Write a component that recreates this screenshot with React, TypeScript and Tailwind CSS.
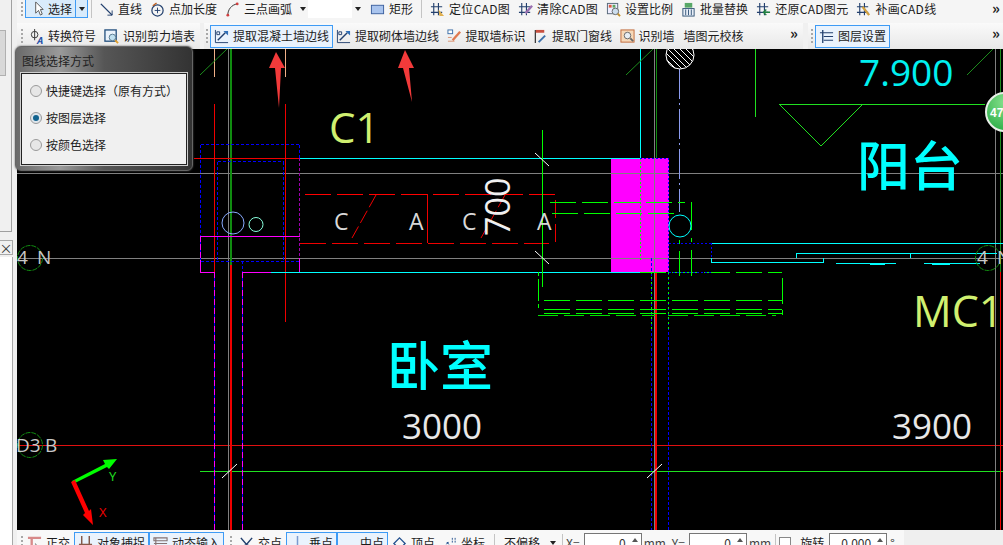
import type { ReactNode } from 'react';

type Seg = [number, number, number, number, string, number?, string?];

const RED = '#f00000';
const CYAN = '#00ffff';
const GREEN = '#00ff00';
const GRAY = '#808080';
const BLUE = '#0000ff';
const PINK = '#ff00ff';
const DGREEN = '#1c8c1c';

const LINES: Seg[] = [
  // long grid lines
  [17, 173.5, 1003, 173.5, GRAY],
  [17, 258.5, 1003, 258.5, GRAY],
  [17, 445.5, 1003, 445.5, '#e01010'],
  [200, 471.5, 1003, 471.5, '#20e020'],
  [228.5, 49, 228.5, 530, GRAY],
  [230.5, 49, 230.5, 265, '#108c10', 2],
  [230.5, 265, 230.5, 530, RED, 2],
  [654.5, 49, 654.5, 530, GRAY],
  [656.5, 49, 656.5, 158, '#108c10'],
  [656, 272, 656, 530, RED, 2],
  [995.5, 49, 995.5, 530, GRAY],
  [1000.5, 49, 1000.5, 445, DGREEN],
  [1000.5, 272, 1000.5, 530, RED],
  // column at the left
  [214.5, 49, 214.5, 77, '#f0b088'],
  [285.5, 49, 285.5, 77, '#f0b088'],
  [214.5, 104, 214.5, 272, RED],
  [285.5, 104, 285.5, 322, RED],
  [194, 158.5, 300, 158.5, RED],
  [200.5, 144.5, 299.5, 144.5, BLUE, 1, '3 2'],
  [200.5, 144.5, 200.5, 236, BLUE, 1, '3 2'],
  [299.5, 144.5, 299.5, 158, BLUE, 1, '3 2'],
  [200.5, 261.5, 299.5, 261.5, BLUE, 1, '3 2'],
  [217.5, 161.5, 283.5, 161.5, BLUE, 1, '3 2'],
  [217.5, 161.5, 217.5, 261, BLUE, 1, '3 2'],
  [283.5, 161.5, 283.5, 261, BLUE, 1, '3 2'],
  [200, 236.5, 300, 236.5, PINK],
  [200.5, 236, 200.5, 261, BLUE],
  [200.5, 236, 200.5, 261, PINK, 1, '6 2'],
  [200.5, 261, 200.5, 273, PINK],
  [200, 272.5, 214, 272.5, PINK],
  [242, 272.5, 271, 272.5, PINK],
  [299.5, 258, 299.5, 272, PINK],
  [299.5, 158, 299.5, 258, '#a000b0', 1, '3 2'],
  [214.5, 272, 214.5, 530, BLUE],
  [214.5, 272, 214.5, 530, PINK, 1, '6 3'],
  [242.5, 261, 242.5, 272, BLUE, 1, '3 2'],
  [242.5, 272, 242.5, 530, BLUE],
  [242.5, 272, 242.5, 530, PINK, 1, '6 3'],
  // wall
  [300, 158.5, 640, 158.5, CYAN],
  [271, 272.5, 640, 272.5, CYAN],
  [640.5, 49, 640.5, 158, CYAN],
  // dashed red opening
  [305, 194.5, 427, 194.5, '#ff0000', 1, '26 6'],
  [433, 194.5, 555, 194.5, '#ff0000', 1, '26 6'],
  [300, 243.5, 427, 243.5, '#f00000', 1, '26 6'],
  [428, 243.5, 549, 243.5, '#f00000', 1, '26 6'],
  [427.5, 194, 427.5, 243, RED],
  [555.5, 200, 555.5, 243, RED, 1, '18 6'],
  [376, 195, 352, 238, RED, 1, '14 4'],
  [505, 195, 481, 238, RED, 1, '14 4'],
  // green cross at the opening
  [542.5, 130, 542.5, 287, GREEN],
  [535, 153, 549, 166, '#ffffff'],
  [535, 251, 549, 264, '#ffffff'],
  [222, 478, 237, 464, '#ffffff'],
  [647, 478, 662, 464, '#ffffff'],
  // right side of wall
  [640.5, 158, 640.5, 260, GREEN, 1, '2 2'],
  [640, 158.5, 669, 158.5, BLUE, 1, '2 2'],
  [668.5, 158, 668.5, 272, BLUE, 1, '2 2'],
  [651.5, 258, 651.5, 530, BLUE, 1, '3 2'],
  [651.5, 272, 651.5, 330, GREEN, 1, '2 3'],
  [668.5, 272, 668.5, 530, BLUE, 1, '3 2'],
  [668.5, 272, 668.5, 330, GREEN, 1, '2 3'],
  [679.5, 69, 679.5, 212, '#8c9cf0', 1, '30 4 2 4'],
  [679.5, 240, 679.5, 244, GREEN],
  [679.5, 251, 679.5, 276, GREEN],
  [691.5, 202, 691.5, 276, GREEN, 1, '28 8 4 8'],
  // green dashes, upper
  [550, 202.5, 685, 202.5, GREEN, 1, '26 6'],
  [552, 213.5, 675, 213.5, GREEN, 1, '26 6'],
  // green dashes, lower
  [640, 272.5, 782, 272.5, GREEN, 1, '26 6'],
  [782.5, 278, 782.5, 304, GREEN],
  [538.5, 272, 538.5, 310, GREEN, 1, '4 3 22 3'],
  [544, 300.5, 782, 300.5, GREEN, 1, '26 6'],
  [544, 309.5, 782, 309.5, GREEN, 1, '26 6'],
  [544, 313.5, 782, 313.5, GREEN, 1, '26 6'],
  [538, 315.5, 655, 315.5, '#00e000', 1, '20 6'],
  [668, 315.5, 776, 315.5, '#00e000', 1, '20 6'],
  [782.5, 310, 782.5, 315, GREEN],
  // balcony line work
  [711, 243.5, 1003, 243.5, CYAN],
  [711, 262.5, 823, 262.5, CYAN],
  [711.5, 258, 711.5, 262, CYAN],
  [823.5, 258, 823.5, 263, CYAN],
  [796, 253.5, 997, 253.5, CYAN],
  [796.5, 253, 796.5, 258, CYAN],
  [910.5, 253, 910.5, 258, CYAN],
  [836, 263.5, 896, 263.5, CYAN],
  [924, 263.5, 980, 263.5, CYAN],
  [870, 264.5, 885, 264.5, CYAN],
  [932, 264.5, 950, 264.5, CYAN],
  [669, 243.5, 711, 243.5, BLUE, 1, '2 2'],
  [669, 272.5, 711, 272.5, BLUE, 1, '2 2'],
  [711.5, 243, 711.5, 258, BLUE, 1, '2 2'],
  [755.5, 49, 755.5, 117, '#20e020'],
  [779, 104.5, 985, 104.5, '#20e020'],
  [779, 104, 821, 146, '#20e020'],
  [821, 146, 863, 104, '#20e020'],
  // thin diagonals
  [200, 75, 227, 49, DGREEN],
  [626, 75, 653, 49, DGREEN],
  [967, 75, 993, 49, DGREEN],
];

function Cad() {
  const sans = "font-['Open_Sans',sans-serif]";
  const cjk = "font-['Noto_Sans_CJK_SC',sans-serif]";
  return (
    <svg className="block h-full w-full" viewBox="17 49 986 481" fill="none">
      <defs>
        <radialGradient id="ball" cx="50%" cy="25%" r="75%">
          <stop offset="0%" stopColor="#86e08c" />
          <stop offset="100%" stopColor="#2fb04a" />
        </radialGradient>
        <clipPath id="hatch">
          <circle cx="680" cy="55" r="14" />
        </clipPath>
      </defs>

      <rect x="611" y="158" width="58" height="114" fill="#ff00ff" />

      <g shapeRendering="crispEdges">
        {LINES.filter((l) => l[0] === l[2] || l[1] === l[3]).map((l, i) => (
          <line
            key={i}
            x1={l[0]}
            y1={l[1]}
            x2={l[2]}
            y2={l[3]}
            stroke={l[4]}
            strokeWidth={l[5] ?? 1}
            strokeDasharray={l[6]}
          />
        ))}
      </g>
      {LINES.filter((l) => l[0] !== l[2] && l[1] !== l[3]).map((l, i) => (
        <line key={i} x1={l[0]} y1={l[1]} x2={l[2]} y2={l[3]} stroke={l[4]} strokeDasharray={l[6]} />
      ))}

      <circle cx="233" cy="223" r="11" stroke="#88aaff" />
      <circle cx="256" cy="224.5" r="7" stroke="#88ffdd" />
      <circle cx="680" cy="226" r="11" stroke="#00ffff" />

      <g clipPath="url(#hatch)" stroke="#fff">
        {[-18, -12, -6, 0, 6, 12, 18].map((o) => (
          <line key={o} x1={665 + o} y1={40} x2={695 + o} y2={70} />
        ))}
      </g>
      <circle cx="680" cy="55" r="14" stroke="#fff" />

      {/* grid bubbles */}
      <circle cx="30" cy="258" r="12.5" stroke="#118c11" strokeDasharray="5 1" />
      <circle cx="30" cy="445" r="12.5" stroke="#118c11" strokeDasharray="5 1" />
      <circle cx="988" cy="258" r="12.5" stroke="#118c11" strokeDasharray="5 1" />

      <g className={sans} fill="#c8c8c8" fontSize="19">
        <text x="17" y="264">4</text>
        <text x="37" y="264">N</text>
        <text x="16" y="452">D3</text>
        <text x="45" y="452">B</text>
        <text x="977" y="264">4</text>
        <text x="997" y="264">N</text>
      </g>
      <g className={sans} fill="#d8d8d8" fontSize="23">
        <text x="334" y="230">C</text>
        <text x="409" y="230">A</text>
        <text x="462" y="230">C</text>
        <text x="537" y="230">A</text>
      </g>
      <text className={sans} fill="#f0f0f0" fontSize="34" transform="translate(510 236) rotate(-90)">700</text>
      <text className={sans} fill="#d0f070" fontSize="42" x="329" y="143">C1</text>
      <text className={sans} fill="#d0f070" fontSize="43" x="913" y="327">MC1</text>
      <text className={sans} fill="#00f0f0" fontSize="37" x="859" y="86">7.900</text>
      <text className={sans} fill="#e8e8e8" fontSize="35" x="402" y="439">3000</text>
      <text className={sans} fill="#e8e8e8" fontSize="35" x="892" y="439">3900</text>
      <text className={cjk} fill="#00ffff" fontSize="53" fontWeight="500" x="857" y="186">阳台</text>
      <text className={cjk} fill="#00ffff" fontSize="53" fontWeight="500" x="387" y="386">卧室</text>

      {/* red callout arrows */}
      <path d="M276 52 L285 68 L281 68 L279 108 L275 68 L269 68 Z" fill="#f23a3a" />
      <path d="M405 50 L414 68 L409 68 L412 102 L403 68 L398 68 Z" fill="#f23a3a" />

      {/* UCS icon */}
      <path d="M72 481 L105 464 L103 460 L117 459 L109 469 L107 467 L73 484 Z" fill="#00ff00" />
      <path d="M71 482 L75 480 L89 511 L91 509 L93 525 L83 515 L85 513 Z" fill="#ff0000" />
      <text className={sans} fill="#20e020" fontSize="13" x="109" y="481">Y</text>
      <text className={sans} fill="#f00000" fontSize="13" x="99" y="517">X</text>

      {/* status ball */}
      <circle cx="1005" cy="112" r="19" fill="url(#ball)" stroke="#e8efe8" strokeWidth="2" />
      <text className="font-['Liberation_Sans',sans-serif]" fill="#fff" fontSize="12" fontWeight="700" x="990" y="117">47</text>
    </svg>
  );
}

function Ico({ children }: { children: ReactNode }) {
  return (
    <svg className="size-[15px] shrink-0" viewBox="0 0 16 16" fill="none">
      {children}
    </svg>
  );
}

const ICONS: Record<string, ReactNode> = {
  cursor: <path d="M5 1 L5 13 L8 10 L10 15 L12 14 L10 9 L13 9 Z" fill="#fff" stroke="#555" />,
  line: (
    <>
      <path d="M2 2 L14 14" stroke="#23406e" strokeWidth="1.5" />
      <path d="M14 9 V14 H9" stroke="#23406e" />
    </>
  ),
  lengthen: (
    <>
      <circle cx="8" cy="9" r="6" stroke="#23406e" strokeWidth="1.3" />
      <path d="M8 6 V12 M5 9 H11" stroke="#23406e" />
      <path d="M3 4 L7 1" stroke="#c06020" strokeWidth="1.5" />
    </>
  ),
  arc: (
    <>
      <path d="M3 14 C3 8 7 3 13 2" stroke="#333" />
      <circle cx="3" cy="14" r="1.5" fill="#d04040" />
      <circle cx="13" cy="2" r="1.5" fill="#d04040" />
    </>
  ),
  rect: <rect x="1.5" y="3.5" width="13" height="9" fill="#a9c4ee" stroke="#3b5f9e" />,
  grid: (
    <>
      <path d="M4 1 V14 M9 1 V14 M1 5 H13 M1 11 H13" stroke="#23406e" strokeWidth="1.2" />
      <path d="M9 8 L15 15 H10 Z" fill="#e0b050" />
    </>
  ),
  clear: (
    <>
      <path d="M4 1 V14 M9 1 V14 M1 5 H13 M1 11 H13" stroke="#23406e" strokeWidth="1.2" />
      <path d="M15 4 L8 12" stroke="#9a70b0" strokeWidth="2.5" />
    </>
  ),
  mag: (
    <>
      <rect x="1.5" y="1.5" width="11" height="11" fill="#eef" stroke="#567" />
      <rect x="3" y="3" width="3" height="3" fill="#e05a40" />
      <rect x="7" y="3" width="3" height="3" fill="#60a860" />
      <circle cx="10" cy="10" r="3.5" fill="#cde" stroke="#666" />
      <path d="M12.5 12.5 L15 15" stroke="#c09030" strokeWidth="2" />
    </>
  ),
  batch: (
    <>
      <rect x="2" y="7" width="12" height="8" fill="#e8eef8" stroke="#357" />
      <path d="M5 8 V14 M8 8 V14 M11 8 V14" stroke="#357" />
      <rect x="4" y="1" width="8" height="5" fill="#58a868" />
    </>
  ),
  restore: (
    <>
      <path d="M4 1 V14 M9 1 V14 M1 5 H13 M1 11 H13" stroke="#23406e" strokeWidth="1.2" />
      <path d="M15 11 H9 M11 8 L8 11 L11 14" stroke="#208040" strokeWidth="1.5" />
    </>
  ),
  draw: (
    <>
      <path d="M4 1 V14 M9 1 V14 M1 5 H13 M1 11 H13" stroke="#23406e" strokeWidth="1.2" />
      <path d="M7 5 L14 14" stroke="#d0a040" strokeWidth="2.5" />
    </>
  ),
  symbol: (
    <>
      <circle cx="6" cy="6" r="3.5" stroke="#333" />
      <path d="M6 0 V12" stroke="#333" />
      <text x="8" y="16" fontSize="10" fontWeight="700" fontStyle="italic" fill="#1f4fa8">A</text>
    </>
  ),
  table: (
    <>
      <rect x="1" y="1" width="12" height="12" fill="#eaf2fb" stroke="#23507e" strokeWidth="1.4" />
      <circle cx="9" cy="9" r="3.5" fill="#bfe0f0" stroke="#56788e" />
      <path d="M12 12 L15 15" stroke="#e0a030" strokeWidth="2" />
    </>
  ),
  extract: (
    <>
      <path d="M1.5 1 V14.5 H15" stroke="#23406e" />
      <path d="M3 3 H6 V6 H3 Z" stroke="#23406e" />
      <path d="M4 12 L12 4" stroke="#23406e" strokeWidth="1.5" />
      <path d="M10 2 L15 2 L15 7 Z" fill="#2f6fb8" />
    </>
  ),
  mark: (
    <>
      <rect x="1" y="1" width="5" height="4" fill="#fff" stroke="#3a6ea8" />
      <path d="M1 13 H8 M1 9 H5" stroke="#d89070" />
      <path d="M6 12 L14 3" stroke="#e07a50" strokeWidth="2.5" />
    </>
  ),
  door: (
    <>
      <path d="M2.5 1 V15" stroke="#333" strokeWidth="1.3" />
      <rect x="3" y="1" width="9" height="3" fill="#c85040" />
      <path d="M6 14 L13 7" stroke="#3a6ea8" strokeWidth="2" />
    </>
  ),
  wall: (
    <>
      <rect x="1" y="1" width="14" height="13" fill="#f6d8b8" stroke="#c06838" />
      <circle cx="8" cy="7" r="3.5" fill="#e8eef4" stroke="#666" />
      <path d="M11 10 L14 13" stroke="#666" strokeWidth="2" />
    </>
  ),
  layer: (
    <>
      <path d="M4 1 V15" stroke="#23406e" strokeWidth="1.4" />
      <path d="M1 4 H15 M5 8 H15 M5 12 H15" stroke="#23406e" strokeWidth="1.3" />
    </>
  ),
  ortho: (
    <>
      <path d="M1 2 H15 M5 2 V15" stroke="#d88a8a" strokeWidth="2.5" />
      <path d="M9 8 V14 L12 12 Z" fill="#fff" stroke="#999" />
    </>
  ),
  snap: (
    <>
      <path d="M4 0 V15 M12 0 V15" stroke="#7a4a3a" strokeWidth="1.4" />
      <path d="M1 9 H15" stroke="#8a5a4a" strokeWidth="1.5" />
      <rect x="5" y="10" width="6" height="5" fill="#c8ae78" />
    </>
  ),
  dyn: <path d="M1 2 H15 V5 H1 Z M1 8 H15 M1 12 H15 M3 2 V14" stroke="#857272" strokeWidth="1.2" />,
  cross: (
    <>
      <path d="M2 2 L8 9 L14 2 M8 9 V15" stroke="#23406e" strokeWidth="1.6" />
      <rect x="6" y="9" width="4" height="4" fill="#23406e" />
    </>
  ),
  perp: <path d="M8 0 V10 M2 11 H14" stroke="#7a9ad0" strokeWidth="1.6" />,
  mid: <path d="M0 11 H5 M11 11 H16 M5 11 H11" stroke="#23508e" strokeWidth="3" />,
  vertex: <path d="M8 2 L14 8 L8 14 L2 8 Z" stroke="#23508e" strokeWidth="1.4" />,
  coord: (
    <>
      <path d="M3 14 L6 6 L9 14" stroke="#23508e" strokeWidth="1.2" strokeDasharray="2 1" />
      <path d="M11 2 V8 M14 2 V8" stroke="#23508e" strokeDasharray="2 1" />
    </>
  ),
};

function Tool({ icon, label, on }: { icon?: string; label: string; on?: boolean }) {
  return (
    <div
      className={`flex h-[23px] shrink-0 items-center gap-[4px] ${
        on ? 'border border-[#3e9bf5] bg-[#eaf3fd] px-[3px]' : ''
      }`}
    >
      {icon && <Ico>{ICONS[icon]}</Ico>}
      <span className={`whitespace-nowrap ${label.includes('CAD') ? 'tracking-[0.3px]' : ''}`}>{label}</span>
    </div>
  );
}

function Grip() {
  return (
    <span className="flex h-[14px] w-[2px] shrink-0 flex-col justify-between">
      <i className="h-[2px] bg-[#a8a8a8]" />
      <i className="h-[2px] bg-[#a8a8a8]" />
      <i className="h-[2px] bg-[#a8a8a8]" />
      <i className="h-[2px] bg-[#a8a8a8]" />
    </span>
  );
}

const Caret = () => <span className="size-0 shrink-0 border-x-[3px] border-t-[4px] border-x-transparent border-t-[#222]" />;
const More = () => <span className="block text-[15px] font-bold leading-none text-[#222]">»</span>;
const Sep = () => <span className="block h-[18px] w-px shrink-0 bg-[#c4c4c4]" />;

function Spin({ value }: { value: string }) {
  return (
    <div className="relative h-[20px] w-[58px] shrink-0 border border-[#777] bg-white pr-[15px] text-right leading-[18px] text-[#333]">
      {value}
      <span className="absolute right-[3px] top-[4px] size-0 border-x-[3px] border-b-[4px] border-x-transparent border-b-[#555]" />
    </div>
  );
}

function Radio({ label, on }: { label: string; on?: boolean }) {
  return (
    <div className="flex h-[27px] items-center gap-[4px]">
      <span
        className={`flex size-[12px] items-center justify-center rounded-full border border-[#9a9a9a] ${
          on ? 'bg-[#dfe6ec]' : 'bg-[#e6e6e6]'
        }`}
      >
        {on && <span className="size-[6px] rounded-full bg-[#12638f]" />}
      </span>
      <span>{label}</span>
    </div>
  );
}

export default function App() {
  return (
    <div className="flex h-[545px] w-[1003px] overflow-hidden bg-[#f0f0f0] font-['Noto_Sans_CJK_SC',sans-serif] text-[12px] leading-none text-[#1c1c1c]">
      {/* docked panel stub */}
      <aside className="flex w-[17px] shrink-0 flex-col">
        <div className="h-[232px] w-[12px] border-r border-b border-[#a0a0a0] pt-[30px]">
          <div className="h-[46px] w-[6px] border border-l-0 border-[#b0b0b0] bg-[#d8d8d8]" />
        </div>
        <div className="mt-[8px] flex h-[15px] w-[13px] items-center justify-center border border-l-0 border-[#a8a8a8] text-[13px] text-[#333]">
          ×
        </div>
        <div className="mt-[2px] w-[13px] flex-1 border-r border-[#a8a8a8] bg-white" />
      </aside>

      <div className="relative flex min-w-0 flex-1 flex-col">
        <header className="flex h-[23px] shrink-0 items-start bg-[#f5f5f5]">
          <div className="flex h-[22px] flex-1 items-start pl-[4px]">
            <span className="mt-[2px]"><Grip /></span>
            <div className="ml-[2px] flex h-[18px] w-[63px] shrink-0 items-center border border-t-0 border-[#3e9bf5] bg-[#d9ebfb] pl-[5px]">
              <Ico>{ICONS.cursor}</Ico>
              <span className="ml-[2px] whitespace-nowrap">选择</span>
              <span className="ml-[3px] flex h-full w-[13px] items-center justify-center border-l border-[#3e9bf5]"><Caret /></span>
            </div>
            <span className="ml-[3px]"><Sep /></span>
            <div className="ml-[7px] flex h-[18px] items-center gap-[8px] [&>div]:h-[18px]">
              <Tool icon="line" label="直线" />
              <Tool icon="lengthen" label="点加长度" />
              <Tool icon="arc" label="三点画弧" />
              <Caret />
            </div>
            <div className="ml-[2px] h-[18px] w-[44px] shrink-0 bg-white" />
            <div className="ml-[3px] flex h-[18px] items-center"><Caret /></div>
            <div className="ml-[9px] flex h-[18px] items-center gap-[8px] [&>div]:h-[18px]">
              <Tool icon="rect" label="矩形" />
              <Sep />
              <Tool icon="grid" label="定位CAD图" />
              <Tool icon="clear" label="清除CAD图" />
              <Tool icon="mag" label="设置比例" />
              <Tool icon="batch" label="批量替换" />
              <Tool icon="restore" label="还原CAD图元" />
              <Tool icon="draw" label="补画CAD线" />
            </div>
            <div className="ml-auto mr-[3px]"><More /></div>
          </div>
        </header>

        <nav className="flex h-[26px] shrink-0 items-center bg-[#f0f0f0]">
          <div className="flex h-full w-[183px] shrink-0 items-center bg-gradient-to-b from-[#fafafa] to-[#e8e8e8] pl-[4px]">
            <Grip />
            <div className="ml-[6px] flex items-center gap-[8px]">
              <Tool icon="symbol" label="转换符号" />
              <Tool icon="table" label="识别剪力墙表" />
            </div>
          </div>
          <div className="ml-[4px] flex h-full w-[599px] shrink-0 items-center bg-gradient-to-b from-[#fafafa] to-[#e8e8e8] pl-[2px]">
            <Grip />
            <div className="ml-[2px]"><Tool icon="extract" label="提取混凝土墙边线" on /></div>
            <div className="ml-[3px] flex items-center gap-[7.5px]">
              <Tool icon="extract" label="提取砌体墙边线" />
              <Tool icon="mark" label="提取墙标识" />
              <Tool icon="door" label="提取门窗线" />
              <Tool icon="wall" label="识别墙" />
              <span className="ml-[1.5px] whitespace-nowrap">墙图元校核</span>
            </div>
            <div className="ml-auto mr-[5px] mb-[8px]"><More /></div>
          </div>
          <div className="ml-[5px] flex h-full flex-1 items-center bg-gradient-to-b from-[#fafafa] to-[#e8e8e8] pl-[3px]">
            <Grip />
            <div className="ml-[2px]"><Tool icon="layer" label="图层设置" on /></div>
            <div className="ml-auto mr-[3px] mb-[8px]"><More /></div>
          </div>
        </nav>

        <main className="min-h-0 flex-1 bg-black">
          <Cad />
        </main>

        <footer className="flex h-[15px] shrink-0 items-start overflow-hidden bg-[#efefef]">
          <div className="flex h-[26px] w-[887px] shrink-0 items-center bg-[#f8f8f8] pl-[4px]">
            <Grip />
            <div className="ml-[4px]"><Tool icon="ortho" label="正交" /></div>
            <div className="ml-[4px] flex [&>div]:w-[75px]">
              <Tool icon="snap" label="对象捕捉" on />
              <Tool icon="dyn" label="动态输入" on />
            </div>
            <div className="ml-[6px]"><Grip /></div>
            <div className="ml-[7px]"><Tool icon="cross" label="交点" /></div>
            <div className="ml-[4px] flex [&>div]:w-[51px]">
              <Tool icon="perp" label="垂点" on />
              <Tool icon="mid" label="中点" on />
            </div>
            <div className="ml-[4px] flex gap-[7px]">
              <Tool icon="vertex" label="顶点" />
              <Tool icon="coord" label="坐标" />
            </div>
            <div className="ml-[9px]"><Sep /></div>
            <span className="ml-[9px] whitespace-nowrap">不偏移</span>
            <div className="ml-[6px] flex h-[20px] w-[13px] items-center justify-center"><Caret /></div>
            <div className="ml-[3px]"><Sep /></div>
            <span className="ml-[3px] text-[#444]">X=</span>
            <div className="ml-[4px]"><Spin value="0" /></div>
            <span className="ml-[2px] text-[#444]">mm</span>
            <span className="ml-[6px] text-[#444]">Y=</span>
            <div className="ml-[4px]"><Spin value="0" /></div>
            <span className="ml-[2px] text-[#444]">mm</span>
            <div className="ml-[4px]"><Sep /></div>
            <span className="ml-[3px] size-[12px] border border-[#888] bg-white" />
            <span className="ml-[9px]">旋转</span>
            <div className="ml-[5px]"><Spin value="0.000" /></div>
            <span className="ml-[3px]">°</span>
          </div>
        </footer>

        {/* floating layer-pick dialog */}
        <section className="absolute left-[-2px] top-[46px] h-[125px] w-[178px] rounded-[6px] border border-[#666] bg-[linear-gradient(90deg,#6a6a6a_0%,#9a9a9a_25%,#565656_50%,#333333_100%)] px-[5px] shadow-[0_0_2px_#555]">
          <h3 className="h-[26px] pl-[1px] pt-[8px] font-normal text-[#222]">图线选择方式</h3>
          <div className="h-[92px] border border-[#222] bg-[#f0f0f0] px-[8px] py-[3px] ring-1 ring-[#cfcfcf]">
            <Radio label="快捷键选择（原有方式）" />
            <Radio label="按图层选择" on />
            <Radio label="按颜色选择" />
          </div>
        </section>
      </div>
    </div>
  );
}
